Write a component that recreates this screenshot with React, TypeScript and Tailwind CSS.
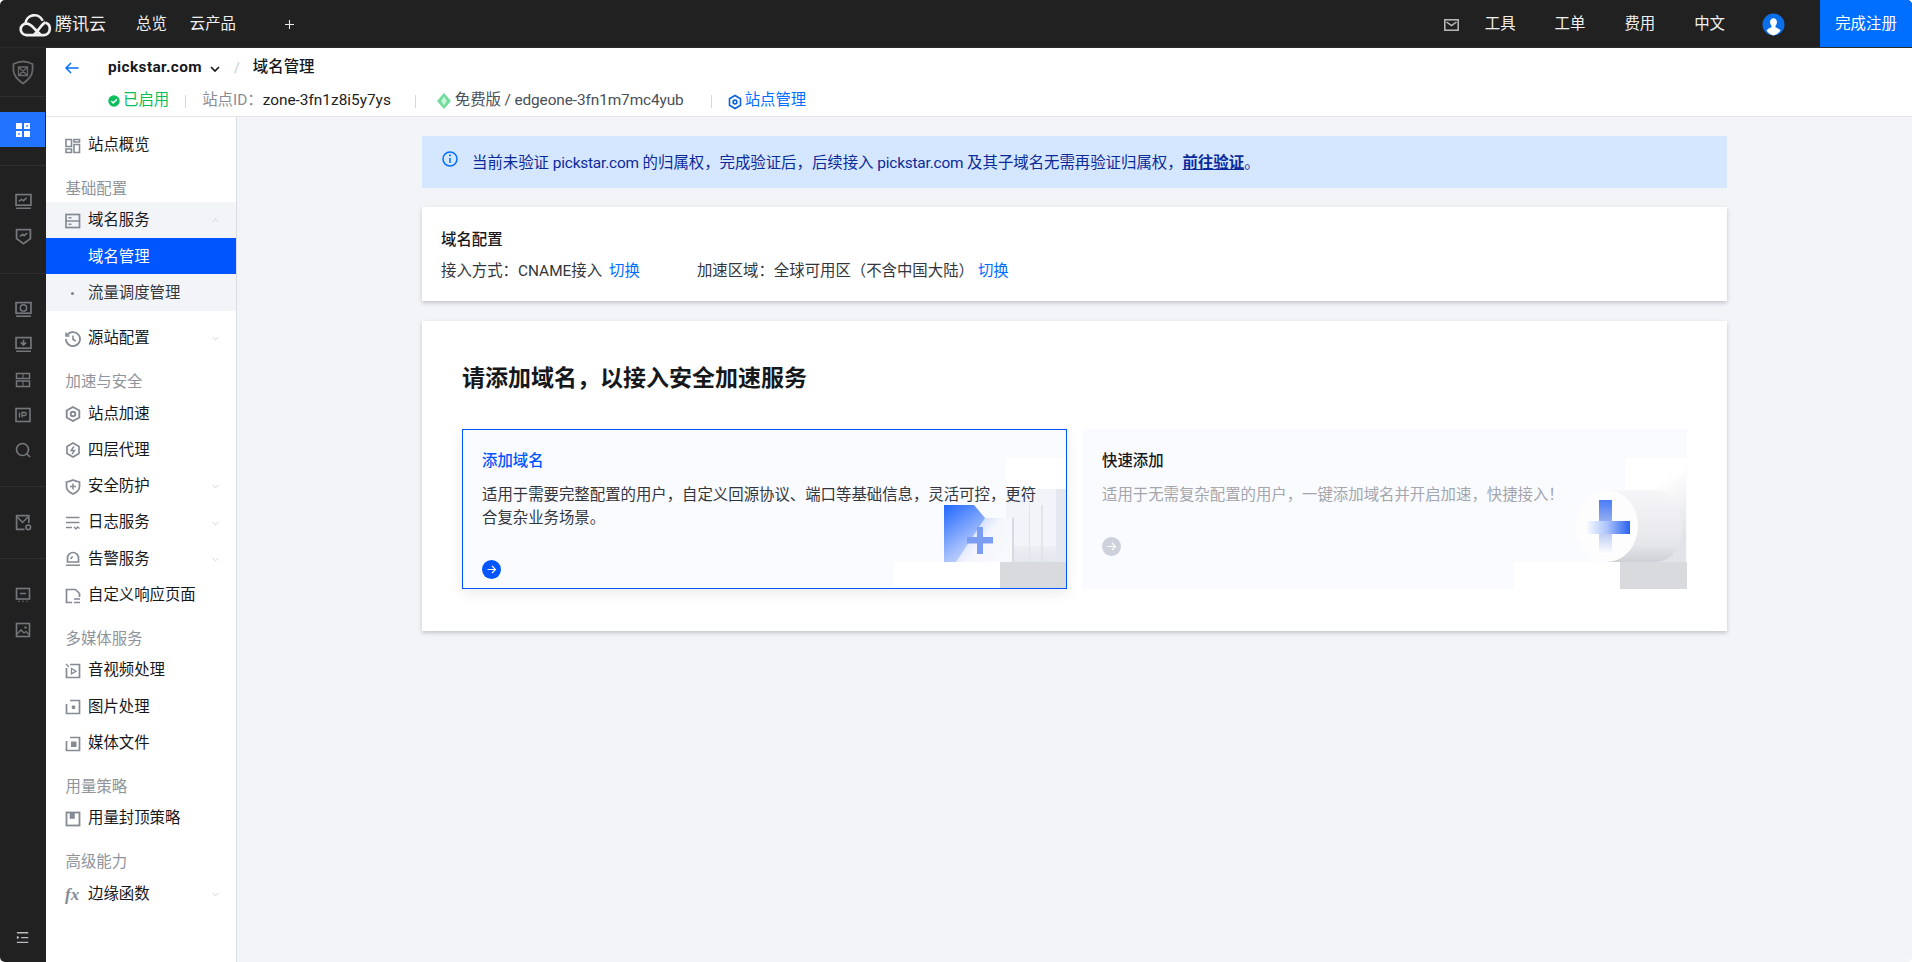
import React from "react";

const FONT = "font-['Roboto','Noto_Sans_CJK_SC',sans-serif]";

const S = ({ children, className = "", size = 16 }: { children: React.ReactNode; className?: string; size?: number }) => (
  <svg viewBox="0 0 16 16" width={size} height={size} fill="none" stroke="currentColor" strokeWidth="1.3" className={`shrink-0 ${className}`}>
    {children}
  </svg>
);

const Chevron = ({ up }: { up?: boolean }) => (
  <svg viewBox="0 0 10 6" width="7" height="5" fill="none" stroke="#c9cdd4" strokeWidth="1.3" className="shrink-0">
    <path d={up ? "M1 5l4-4 4 4" : "M1 1l4 4 4-4"} />
  </svg>
);

const Logo = () => (
  <svg viewBox="2 1.5 31 22" width="33" height="24" fill="none" stroke="#f1f1f1" strokeWidth="2.5" className="shrink-0">
    <path d="M9 22h16.500a6 6 0 0 0 1.500-11.600" />
    <path d="M8 11.500a8.500 8.500 0 0 1 16.300-3" />
    <path d="M9 22a5.400 5.400 0 0 1 0-10.800c3.200 0 5.200 2.200 7 4.200 2 2.100 3.700 4.100 5.500 5.400" strokeLinecap="round" />
    <path d="M16 21.800c3-1.800 6-8.800 10-11.400" strokeLinecap="round" />
  </svg>
);

const railIcons = {
  monitor1: (
    <S size={17}>
      <rect x="1" y="1.500" width="14" height="10" strokeWidth="1.600" />
      <path d="M3.500 8l2.500-2 2 1.200L11 4.500M1 14.300h14" strokeWidth="1.500" />
    </S>
  ),
  shield: (
    <S size={17}>
      <path d="M1.500 1.500h13v8.500L8 14.800 1.500 10z" strokeWidth="1.700" />
      <path d="M4.500 8L7 6l1.500 1.200 3-2.500" strokeWidth="1.500" />
    </S>
  ),
  monitor2: (
    <S size={17}>
      <rect x="1" y="1.500" width="14" height="10" strokeWidth="1.600" />
      <circle cx="8" cy="6.500" r="3" strokeWidth="1.300" />
      <path d="M1 14.300h14" strokeWidth="1.500" />
    </S>
  ),
  monitor3: (
    <S size={17}>
      <rect x="1" y="1.500" width="14" height="10" strokeWidth="1.600" />
      <path d="M8 3.500v4.500M5.500 6L8 8.500 10.500 6M1 14.300h14" strokeWidth="1.500" />
    </S>
  ),
  rows: (
    <S size={16}>
      <rect x="1.500" y="1.500" width="13" height="5" strokeWidth="1.500" />
      <rect x="1.500" y="9" width="13" height="5.500" strokeWidth="1.500" />
      <path d="M8 1.500v5M8 9v5.500" strokeWidth="1" />
    </S>
  ),
  ip: (
    <S size={16}>
      <rect x="1" y="1.500" width="14" height="13" strokeWidth="1.600" />
      <path d="M4.500 5.500v5M7 10.500v-5h2.800a1.500 1.500 0 0 1 0 3H7" strokeWidth="1.300" />
    </S>
  ),
  search: (
    <S size={16}>
      <circle cx="7.500" cy="7.500" r="6" strokeWidth="1.700" />
      <path d="M12 12l3 3" strokeWidth="1.700" />
    </S>
  ),
  mailGear: (
    <S size={17}>
      <path d="M9 14.500H1.500v-13h11.500v7" strokeWidth="1.600" />
      <path d="M2 2.500L7 8l5.500-5.500" strokeWidth="1.400" />
      <circle cx="12.500" cy="12.500" r="2.200" strokeWidth="1.500" />
    </S>
  ),
  board: (
    <S size={16}>
      <rect x="1.500" y="1.500" width="13" height="10.500" strokeWidth="1.600" />
      <path d="M5 6.500h6M4 14.800v-1M8 14.800v-1M12 14.800v-1" strokeWidth="1.500" />
    </S>
  ),
  image: (
    <S size={16}>
      <rect x="1.500" y="1.500" width="13" height="13" strokeWidth="1.600" />
      <path d="M2 12l4-4 3 3 2-1.500 3 3" strokeWidth="1.300" />
      <circle cx="10.500" cy="5.500" r="1" fill="currentColor" strokeWidth="0.500" />
    </S>
  ),
};

const RailIcon = ({ children }: { children: React.ReactNode }) => (
  <div className="flex h-[35px] items-center justify-center text-[#74777c]">{children}</div>
);

const Rail = () => (
  <aside className="flex w-[46px] shrink-0 flex-col bg-[#212121]">
    <div className="flex h-[49px] shrink-0 items-center justify-center border-b border-[#2e2e2e]">
      <svg viewBox="0 0 22 25" width="22" height="25" fill="none" stroke="#66686c" strokeWidth="1.800">
        <path d="M1.500 4C4.500 2.500 8 1.500 11 1.500S17.500 2.500 20.500 4c.5 7 .5 13-9.500 19.500C1 17 1 11 1.500 4z" />
        <path d="M6.500 7h9v8.500h-9zM6.500 7l9 8.500M15.500 7l-9 8.500" strokeWidth="1.300" />
      </svg>
    </div>
    <div className="h-[69px] shrink-0 border-b border-[#2e2e2e] pt-[15px]">
      <div className="flex h-[35px] w-[45px] items-center justify-center bg-[#2273ff]">
        <svg viewBox="0 0 14 14" width="14" height="14" fill="#fff">
          <path d="M0 0h6v6H0zM8 0h6v6H8zM8 8h6v6H8zM0 8h6v6H0z" />
          <path d="M2.200 10.200h1.600v1.600H2.200zM10.200 2.200h1.600v1.600h-1.600z" fill="#2273ff" />
        </svg>
      </div>
    </div>
    <div className="shrink-0 border-b border-[#2e2e2e] pb-[19px] pt-[18px]">
      <RailIcon>{railIcons.monitor1}</RailIcon>
      <RailIcon>{railIcons.shield}</RailIcon>
    </div>
    <div className="shrink-0 border-b border-[#2e2e2e] pb-[19px] pt-[18px]">
      <RailIcon>{railIcons.monitor2}</RailIcon>
      <RailIcon>{railIcons.monitor3}</RailIcon>
      <RailIcon>{railIcons.rows}</RailIcon>
      <RailIcon>{railIcons.ip}</RailIcon>
      <RailIcon>{railIcons.search}</RailIcon>
    </div>
    <div className="shrink-0 border-b border-[#2e2e2e] py-[18px]">
      <RailIcon>{railIcons.mailGear}</RailIcon>
    </div>
    <div className="shrink-0 pt-[18px]">
      <RailIcon>{railIcons.board}</RailIcon>
      <RailIcon>{railIcons.image}</RailIcon>
    </div>
    <div className="mt-auto flex h-[48px] items-center justify-center text-[#b9bbbe]">
      <S size={14}>
        <path d="M1 2h13M6 7.500h8M1 13h13" strokeWidth="1.500" />
        <path d="M1 5.500l3 2-3 2z" fill="currentColor" stroke="none" />
      </S>
    </div>
  </aside>
);

const TopBar = () => (
  <header className="flex h-[48px] shrink-0 items-center border-b border-[#2a2a2a] bg-[#212121] pt-[2px] text-[15.4px] text-[#f0f0f0]">
    <div className="ml-[19px] flex items-center gap-[3px]">
      <Logo />
      <span className="text-[17px]">腾讯云</span>
    </div>
    <span className="ml-[30px]">总览</span>
    <span className="ml-[23px]">云产品</span>
    <svg viewBox="0 0 10 10" width="9" height="9" stroke="#e8e8e8" strokeWidth="1.200" className="ml-[49px]">
      <path d="M5 0v10M0 5h10" />
    </svg>
    <div className="ml-auto flex h-full items-center">
      <svg viewBox="0 0 15 12" width="15" height="12" fill="none" stroke="#bdbdbd" strokeWidth="1.500" className="mr-[26px]">
        <rect x="0.800" y="0.800" width="13.400" height="10.400" />
        <path d="M2.500 3l5 3.500L12.500 3" />
      </svg>
      <span className="mr-[39px]">工具</span>
      <span className="mr-[39px]">工单</span>
      <span className="mr-[39px]">费用</span>
      <span className="mr-[37px]">中文</span>
      <svg viewBox="0 0 24 24" width="23" height="23" className="mr-[35px]">
        <circle cx="12" cy="12" r="11.500" fill="#0a6fe8" />
        <path d="M12 5.500c2.200 0 3.600 1.800 3.600 4 0 1.800-.8 3.200-1.600 4v1.300c2 .8 4.200 1.800 5.300 3.400A11.500 11.500 0 0 1 12 23.500a11.500 11.500 0 0 1-7.300-5.300c1.100-1.600 3.300-2.600 5.300-3.400v-1.300c-.8-.8-1.600-2.200-1.600-4 0-2.200 1.400-4 3.600-4z" fill="#fff" />
      </svg>
      <div className="-mt-[2px] flex h-[47px] w-[92px] items-center justify-center bg-[#006eff] pt-[2px] text-white">完成注册</div>
    </div>
  </header>
);

const SubHeader = () => (
  <div className="flex h-[69px] shrink-0 flex-col border-b border-[#e4e6eb] bg-white">
    <div className="flex h-[36px] shrink-0 items-center pt-[4px] text-[#16181c]">
      <svg viewBox="0 0 14 12" width="14" height="12" fill="none" stroke="#006eff" strokeWidth="1.500" className="ml-[19px]">
        <path d="M13.500 6H1M6 1L1 6l5 5" />
      </svg>
      <span className="ml-[29px] text-[15.4px] font-bold tracking-[0.4px]">pickstar.com</span>
      <svg viewBox="0 0 10 7" width="10" height="7" fill="none" stroke="#16181c" strokeWidth="1.700" className="ml-[8px] mt-[3px]">
        <path d="M1 1l4 4 4-4" />
      </svg>
      <span className="ml-[14px] text-[14px] text-[#c9ccd2]">/</span>
      <span className="ml-[13px] text-[15.4px] font-medium">域名管理</span>
    </div>
    <div className="flex h-[32px] shrink-0 items-center pl-[62px] pt-[2px] text-[15.4px]">
      <svg viewBox="0 0 12 12" width="12" height="12" className="shrink-0">
        <circle cx="6" cy="6" r="5.700" fill="#0abf5b" />
        <path d="M3.200 6l2 2 3.600-3.600" fill="none" stroke="#fff" strokeWidth="1.500" />
      </svg>
      <span className="ml-[3px] text-[#0abf5b]">已启用</span>
      <span className="ml-[16px] h-[13px] w-px bg-[#d5d8de]" />
      <span className="ml-[16px] text-[#888c94]">站点ID：</span>
      <span className="text-[#222]">zone-3fn1z8i5y7ys</span>
      <span className="ml-[24px] h-[13px] w-px bg-[#d5d8de]" />
      <svg viewBox="0 0 14 16" width="14" height="16" className="ml-[21px] shrink-0">
        <path d="M7 0l7 8-7 8-7-8z" fill="#6fdc9a" />
        <path d="M7 3.500L10 8l-3 4.500L4 8z" fill="#c8f3d8" />
      </svg>
      <span className="ml-[4px] tracking-[-0.1px] text-[#4a4f58]">免费版 / edgeone-3fn1m7mc4yub</span>
      <span className="ml-[27px] h-[13px] w-px bg-[#d5d8de]" />
      <svg viewBox="0 0 14 16" width="14" height="16" fill="none" stroke="#0a63dc" strokeWidth="1.600" className="ml-[16px] mt-[2px] shrink-0">
        <path d="M7 1.500l5.500 3.200v6.600L7 14.500l-5.500-3.200V4.700z" />
        <circle cx="7" cy="8" r="1.900" />
      </svg>
      <span className="ml-[3px] text-[#006eff]">站点管理</span>
    </div>
  </div>
);

const sideIcon = {
  overview: (
    <S>
      <path d="M1 1.500h5.500v7H1zM1 11h5.500v3.500H1zM9 1.500h5.500V4H9zM9 6.500h5.500v8H9z" strokeWidth="1.600" />
    </S>
  ),
  domain: (
    <S>
      <rect x="1" y="1.500" width="13.500" height="13" strokeWidth="1.700" />
      <path d="M1 8h13.500M3.500 4.800h3M3.500 11.200h3" strokeWidth="1.500" />
    </S>
  ),
  origin: (
    <S>
      <path d="M2 4.500A7 7 0 1 1 1 8" strokeWidth="1.800" />
      <path d="M1 1.500v3.500h3.500" strokeWidth="1.600" />
      <path d="M8 4.500V8.500l2.800 1.500" strokeWidth="1.600" />
    </S>
  ),
  speed: (
    <S>
      <path d="M8 1l6.300 3.500v7L8 15l-6.300-3.500v-7z" strokeWidth="1.900" />
      <circle cx="8" cy="8" r="2.300" strokeWidth="1.900" />
    </S>
  ),
  l4: (
    <S>
      <path d="M8 1l6 3.500v7L8 15l-6-3.500v-7z" strokeWidth="1.700" />
      <path d="M9 4.500L6 8.500h3.500L7 12" strokeWidth="1.400" />
    </S>
  ),
  sec: (
    <S>
      <path d="M1.500 3C4 2.500 6 2 8 1c2 1 4 1.500 6.500 2v4.500c0 3.500-3 6-6.500 7.500C4.500 13.500 1.500 11 1.500 7.500z" strokeWidth="1.700" />
      <path d="M8 4.500v6M5 7.500h6" strokeWidth="1.500" />
    </S>
  ),
  log: (
    <S>
      <path d="M1 2.500h13.500M1 7.500h13.500M1 12.500h6" strokeWidth="1.600" />
      <path d="M9 12l2 2 1.500-2 2 1.500" strokeWidth="1.400" />
    </S>
  ),
  alarm: (
    <S>
      <path d="M2.500 11V7a5.500 5.500 0 0 1 11 0v4z" strokeWidth="1.700" />
      <path d="M1 14.300h14M6 8a2 2 0 0 1 2-2" strokeWidth="1.500" />
    </S>
  ),
  page: (
    <S>
      <path d="M7 14.500H1.500v-13h9l4 4v3.500" strokeWidth="1.700" />
      <path d="M9 11h6M9 14.500h6" strokeWidth="1.600" />
    </S>
  ),
  video: (
    <S>
      <path d="M5 1.500h9.500v13H1.500V5" strokeWidth="1.700" />
      <path d="M1 1l3 3M6.500 5.500l4.500 2.700-4.500 2.600z" strokeWidth="1.300" />
    </S>
  ),
  photo: (
    <S>
      <path d="M5 1.500h9.500v13H1.500V5" strokeWidth="1.700" />
      <circle cx="8.500" cy="8.200" r="1.300" fill="currentColor" />
    </S>
  ),
  media: (
    <S>
      <path d="M5 1.500h9.500v13H1.500V5" strokeWidth="1.700" />
      <rect x="6" y="5.500" width="5.500" height="5.500" fill="currentColor" stroke="none" />
    </S>
  ),
  cap: (
    <S>
      <rect x="1.500" y="1.500" width="13" height="13" strokeWidth="1.800" />
      <path d="M5 1.500v6h4.500v-6" fill="currentColor" strokeWidth="0.600" />
    </S>
  ),
};

const Row = ({ icon, label, chevron, up }: { icon: React.ReactNode; label: string; chevron?: boolean; up?: boolean }) => (
  <div className="flex h-[36.3px] items-center pl-[19px] pr-[17px] pt-[2px] text-[#16181c]">
    <span className="flex w-[23px] shrink-0 text-[#848b95]">{icon}</span>
    <span className="flex-1">{label}</span>
    {chevron && <Chevron up={up} />}
  </div>
);

const GroupLabel = ({ children }: { children: React.ReactNode }) => (
  <div className="flex h-[39px] items-center pl-[19.500px] pt-[14px] text-[#8f949c]">{children}</div>
);

const Sidebar = () => (
  <nav className="w-[191px] shrink-0 border-r border-[#d8dbe3] bg-white pt-[9.500px] text-[15.4px]">
    <Row icon={sideIcon.overview} label="站点概览" />
    <GroupLabel>基础配置</GroupLabel>
    <div className="bg-[#f2f4f8]">
      <Row icon={sideIcon.domain} label="域名服务" chevron up />
      <div className="flex h-[36.3px] items-center bg-[#0055ff] pl-[42px] pt-[2px] text-white">域名管理</div>
      <div className="flex h-[36.3px] items-center pl-[25px] pt-[2px] text-[#33373d]">
        <span className="mr-[14px] h-[3px] w-[3px] rounded-full bg-[#7c828c]" />
        流量调度管理
      </div>
    </div>
    <div className="mt-[9px]">
      <Row icon={sideIcon.origin} label="源站配置" chevron />
    </div>
    <GroupLabel>加速与安全</GroupLabel>
    <Row icon={sideIcon.speed} label="站点加速" />
    <Row icon={sideIcon.l4} label="四层代理" />
    <Row icon={sideIcon.sec} label="安全防护" chevron />
    <Row icon={sideIcon.log} label="日志服务" chevron />
    <Row icon={sideIcon.alarm} label="告警服务" chevron />
    <Row icon={sideIcon.page} label="自定义响应页面" />
    <GroupLabel>多媒体服务</GroupLabel>
    <Row icon={sideIcon.video} label="音视频处理" />
    <Row icon={sideIcon.photo} label="图片处理" />
    <Row icon={sideIcon.media} label="媒体文件" />
    <GroupLabel>用量策略</GroupLabel>
    <Row icon={sideIcon.cap} label="用量封顶策略" />
    <GroupLabel>高级能力</GroupLabel>
    <Row icon={<span className="font-['Liberation_Serif',serif] text-[17px] font-bold italic leading-none text-[#848b95]">fx</span>} label="边缘函数" chevron />
  </nav>
);

const Arrow = ({ muted }: { muted?: boolean }) => (
  <svg viewBox="0 0 19 19" width="19" height="19" className="shrink-0">
    <circle cx="9.500" cy="9.500" r="9.500" fill={muted ? "#ccd1dc" : "#0055ff"} />
    <path d="M5.500 9.500h8M10 6l3.500 3.500L10 13" fill="none" stroke="#fff" strokeWidth="1.200" />
  </svg>
);

const FolderArt = () => (
  <svg viewBox="0 0 173 131" width="173" height="131" className="absolute bottom-[-1px] right-[-1px]">
    <defs>
      <linearGradient id="a1" x1="0" y1="0" x2="0" y2="1">
        <stop offset="0" stopColor="#ffffff" />
        <stop offset="0.55" stopColor="#ffffff" />
        <stop offset="1" stopColor="#e4e6ee" />
      </linearGradient>
      <linearGradient id="a2" x1="0" y1="0" x2="0.9" y2="1">
        <stop offset="0" stopColor="#1f66ff" />
        <stop offset="0.55" stopColor="#a9c2fb" />
        <stop offset="1" stopColor="#eef2ff" />
      </linearGradient>
      <linearGradient id="a3" x1="0" y1="0" x2="1" y2="0.6">
        <stop offset="0" stopColor="#eef2ff" stopOpacity="0.2" />
        <stop offset="0.6" stopColor="#f6f7fd" />
        <stop offset="1" stopColor="#f8f9fd" />
      </linearGradient>
      <filter id="a4" x="-20%" y="-20%" width="140%" height="140%">
        <feGaussianBlur stdDeviation="0.700" />
      </filter>
    </defs>
    <rect x="112" y="0" width="60" height="104" fill="url(#a1)" />
    <path d="M112 31h50v57h-50z" fill="#f3f4f9" />
    <path d="M135 47h1v57h-1zM147 47h2v57h-2z" fill="#e2e4eb" />
    <path d="M162 31h10v73h-10z" fill="#e6e8f1" />
    <path d="M50 47h30l11 13h29v44H50z" fill="url(#a2)" />
    <path d="M91 60h29v44H62z" fill="url(#a3)" />
    <path d="M118 60h2v44h-2z" fill="#d7dae3" />
    <path d="M83 69h6v10h10v6.500H89V96h-6V85.500H73V79h10z" fill="#7c9ef2" filter="url(#a4)" />
    <rect x="0" y="104" width="106" height="27" fill="#ffffff" />
    <rect x="106" y="104" width="67" height="27" fill="#d9dade" />
  </svg>
);

const CylinderArt = () => (
  <svg viewBox="0 0 173 131" width="173" height="131" className="absolute bottom-0 right-0">
    <defs>
      <linearGradient id="b1" x1="0" y1="0" x2="0.4" y2="1">
        <stop offset="0" stopColor="#ffffff" />
        <stop offset="0.4" stopColor="#ffffff" />
        <stop offset="1" stopColor="#e2e3e8" />
      </linearGradient>
      <linearGradient id="b2" x1="0" y1="0" x2="0" y2="1">
        <stop offset="0" stopColor="#f6f6f9" />
        <stop offset="0.75" stopColor="#e6e7ea" />
        <stop offset="1" stopColor="#cfd0d5" />
      </linearGradient>
      <linearGradient id="b3" x1="0" y1="0" x2="1" y2="0">
        <stop offset="0" stopColor="#ffffff" />
        <stop offset="0.5" stopColor="#a9c2fb" />
        <stop offset="1" stopColor="#2a62ee" />
      </linearGradient>
      <linearGradient id="b4" x1="0" y1="0" x2="0" y2="1">
        <stop offset="0" stopColor="#4a7cf5" />
        <stop offset="0.5" stopColor="#a9bcf0" />
        <stop offset="1" stopColor="#ffffff" />
      </linearGradient>
      <filter id="b5" x="-30%" y="-20%" width="160%" height="140%">
        <feGaussianBlur stdDeviation="0.600" />
      </filter>
    </defs>
    <rect x="111" y="0" width="61" height="104" fill="url(#b1)" />
    <path d="M93 32h47c18 0 28 18 28 36 0 20-10 36-28 36H93z" fill="url(#b2)" />
    <ellipse cx="93" cy="68" rx="31" ry="36" fill="#fdfdfe" />
    <rect x="85" y="42" width="13" height="54" fill="url(#b4)" filter="url(#b5)" />
    <rect x="71" y="63" width="45" height="13" fill="url(#b3)" filter="url(#b5)" />
    <rect x="0" y="104" width="106" height="27" fill="#ffffff" />
    <rect x="106" y="104" width="67" height="27" fill="#d9dade" />
  </svg>
);

const Latin = ({ children }: { children: React.ReactNode }) => <span className="tracking-[-0.19px]">{children}</span>;

const Main = () => (
  <main className="min-w-0 flex-1 bg-[#f2f4f8] px-[185px] pt-[19px] text-[15.4px]">
    <div className="flex h-[52px] items-start bg-[#d5e7ff] pl-[20px] pt-[15px] text-[#0b2a9a]">
      <svg viewBox="0 0 16 16" width="16" height="16" fill="none" stroke="#006eff" strokeWidth="1.500" className="shrink-0">
        <circle cx="8" cy="8" r="7" />
        <path d="M8 7v5" />
        <path d="M8 3.600v1.600" strokeWidth="1.800" />
      </svg>
      <span className="ml-[14px] mt-[1px] leading-[22px]">
        当前未验证 <Latin>pickstar.com</Latin> 的归属权，完成验证后，后续接入 <Latin>pickstar.com</Latin> 及其子域名无需再验证归属权，
        <span className="font-bold underline">前往验证</span>。
      </span>
    </div>

    <section className="mt-[19px] h-[94px] bg-white pl-[19px] pt-[22px] shadow-[0_2px_4px_rgba(54,58,80,0.25)]">
      <div className="font-medium leading-[22px] text-[#16181c]">域名配置</div>
      <div className="mt-[9px] flex leading-[22px] text-[#33373d]">
        <span>接入方式：CNAME接入</span>
        <span className="ml-[7px] text-[#006eff]">切换</span>
        <span className="ml-[57px]">加速区域：全球可用区（不含中国大陆）</span>
        <span className="ml-[4px] text-[#006eff]">切换</span>
      </div>
    </section>

    <section className="mt-[20px] h-[310px] bg-white px-[40px] pt-[42px] shadow-[0_2px_4px_rgba(54,58,80,0.25)]">
      <h1 className="text-[23px] font-bold leading-[32px] text-[#16181c]">请添加域名，以接入安全加速服务</h1>
      <div className="mt-[34px] flex gap-[15px]">
        <div className="relative h-[160px] w-[605px] shrink-0 overflow-hidden border border-[#0055ff] bg-[#fafbff] pl-[19px] pr-[30px] pt-[20px] shadow-[0_4px_12px_rgba(54,58,80,0.1)]">
          <FolderArt />
          <div className="relative">
            <div className="font-medium leading-[22px] text-[#0055ff]">添加域名</div>
            <p className="mt-[12px] w-[556px] leading-[23px] text-[#33373d]">
              适用于需要完整配置的用户，自定义回源协议、端口等基础信息，灵活可控，更符合复杂业务场景。
            </p>
            <div className="mt-[30px]">
              <Arrow />
            </div>
          </div>
        </div>
        <div className="relative h-[160px] w-[605px] shrink-0 overflow-hidden bg-[#fafbff] pl-[20px] pr-[30px] pt-[21px]">
          <CylinderArt />
          <div className="relative">
            <div className="font-medium leading-[22px] text-[#16181c]">快速添加</div>
            <p className="mt-[12px] leading-[23px] text-[#a3a6ad]">适用于无需复杂配置的用户，一键添加域名并开启加速，快捷接入！</p>
            <div className="mt-[30px]">
              <Arrow muted />
            </div>
          </div>
        </div>
      </div>
    </section>
  </main>
);

export default function App() {
  return (
    <div className={`flex h-screen w-full flex-col overflow-hidden rounded-[5px] bg-white ${FONT}`}>
      <TopBar />
      <div className="flex min-h-0 flex-1">
        <Rail />
        <div className="flex min-w-0 flex-1 flex-col">
          <SubHeader />
          <div className="flex min-h-0 flex-1">
            <Sidebar />
            <Main />
          </div>
        </div>
      </div>
    </div>
  );
}
